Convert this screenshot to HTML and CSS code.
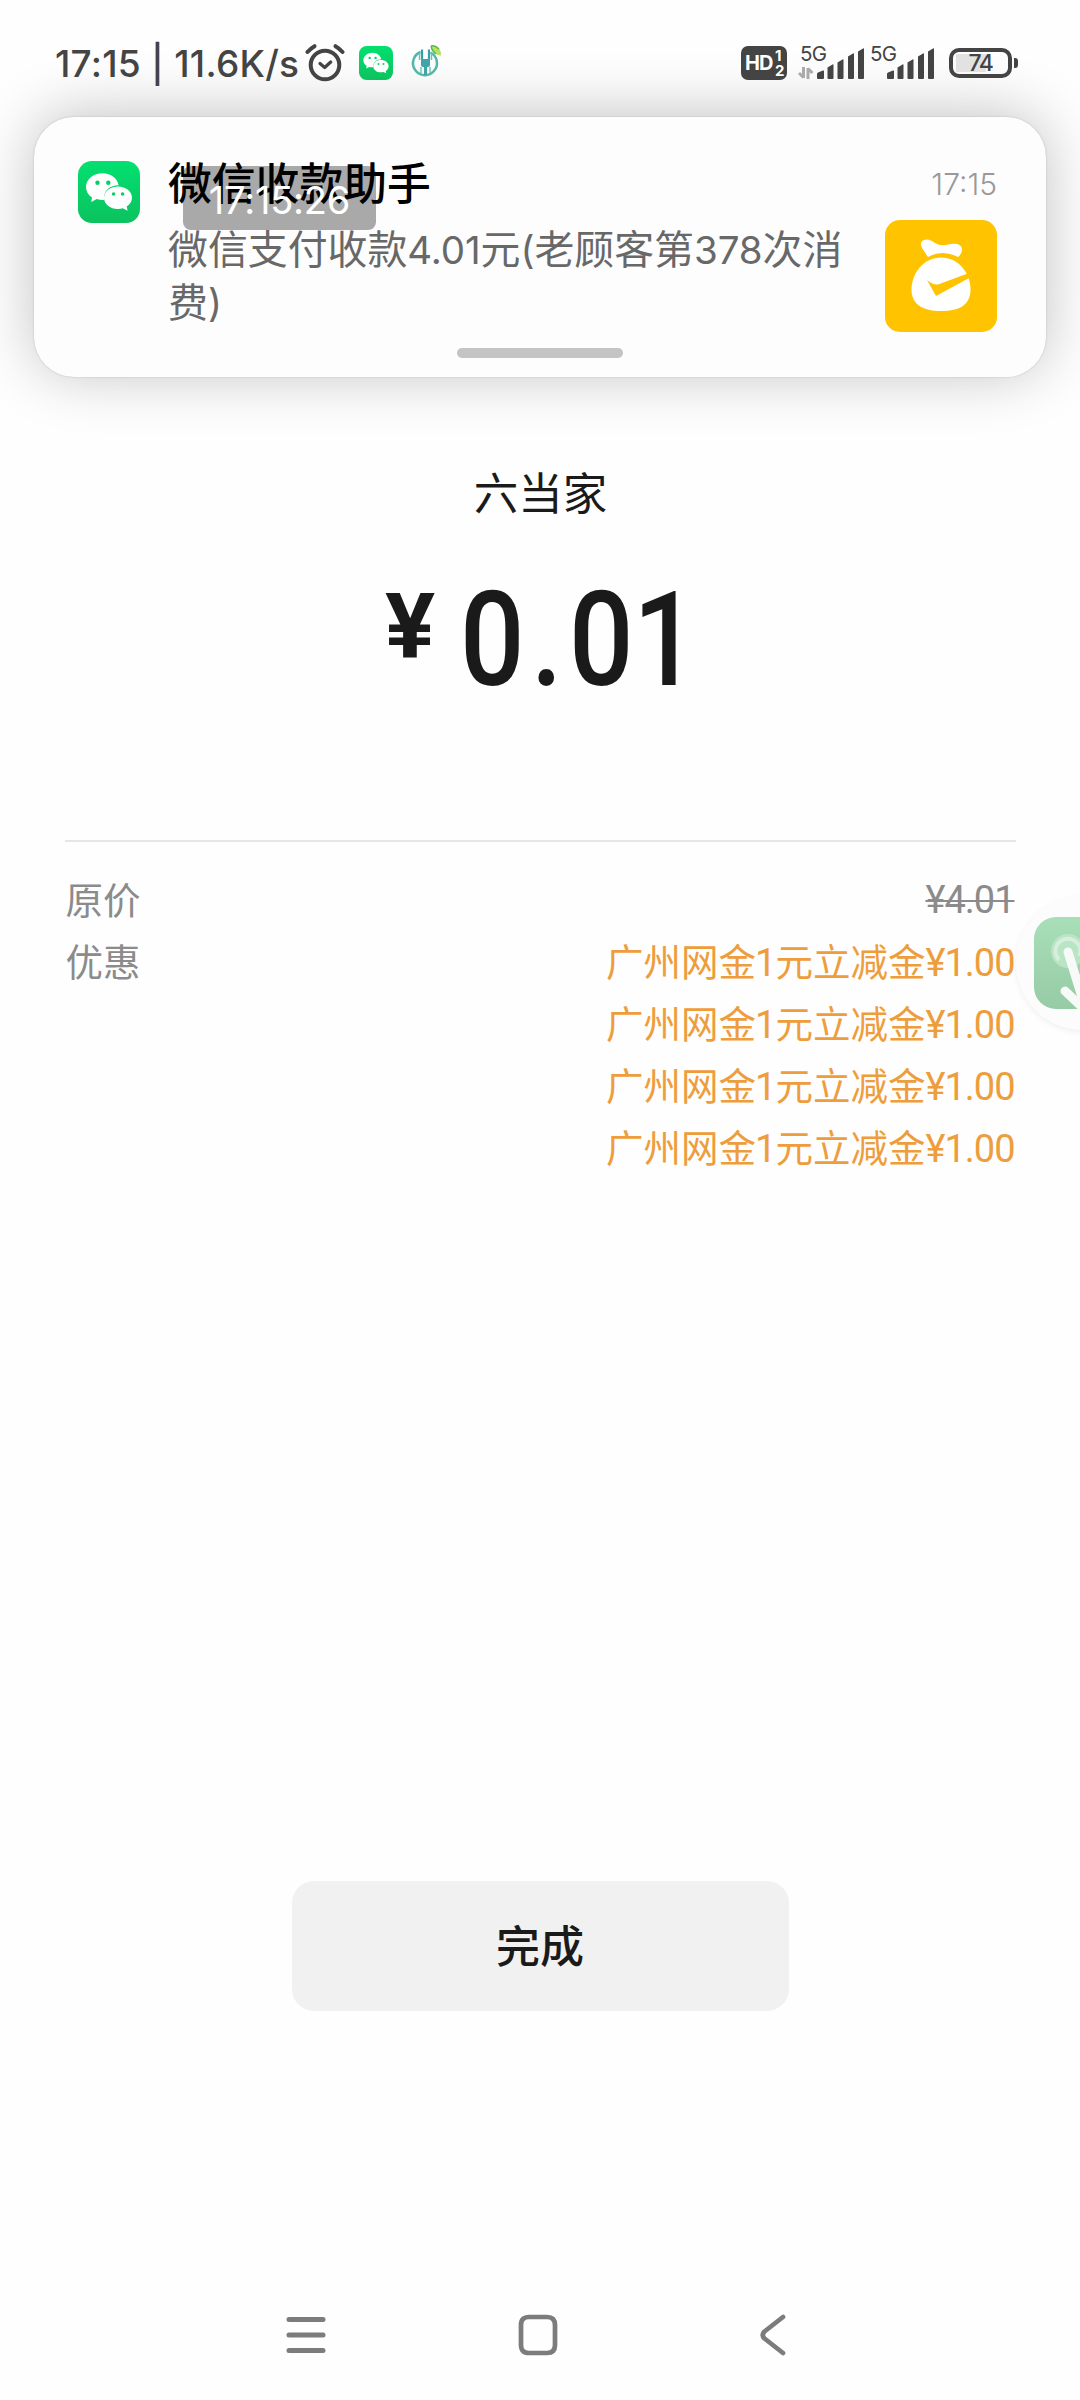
FILE: index.html
```html
<!DOCTYPE html>
<html lang="zh-CN">
<head>
<meta charset="utf-8">
<title>支付完成</title>
<link rel="stylesheet" href="styles.css">
</head>
<body>
<svg class="defs" width="0" height="0">
  <defs>
    <linearGradient id="wg" x1="0" y1="0" x2="0" y2="1"><stop offset="0" stop-color="#02e070"/><stop offset="1" stop-color="#0bc25f"/></linearGradient>
    <symbol id="wechat" viewBox="0 0 62 62">
      <rect width="62" height="62" rx="14" fill="url(#wg)"/>
      <path fill="#fff" d="M24.500 12.300C15.500 12.300 8 18.300 8 26c0 4.300 2.300 8 6 10.500L13.200 41l5.600-2.900c2 .6 4 .8 6 .8h1.600C24.600 31 31 24.300 40.600 24.300 39.500 17.500 33 12.300 24.500 12.300z"/>
      <path fill="#fff" d="M40 25.500c-8 0-14 5-14 11.200S32 48 40 48c1.700 0 3.300-.2 4.800-.7l4.800 2.500-.9-4.300c3.200-2 5.300-5.200 5.300-8.800 0-6.200-6-11.200-14-11.200z"/>
      <g fill="#05cf66"><circle cx="19.500" cy="21.700" r="2.200"/><circle cx="30.300" cy="21.700" r="2.200"/><circle cx="35.600" cy="33" r="1.800"/><circle cx="44.600" cy="33" r="1.800"/></g>
    </symbol>
    <symbol id="signal" viewBox="0 0 48 32">
      <g fill="#444"><path d="M0 31v-4q0-1 1-1.500l5-2q1-.4 1 .5v7q0 1-1 1H1q-1 0-1-1z"/><path d="M10.500 31V20.500l5-3q1-.5 1 .5v13q0 1-1 1h-4q-1 0-1-1z"/><path d="M20.500 31V15.500l5-3q1-.5 1 .5v18q0 1-1 1h-4q-1 0-1-1z"/><path d="M31 31V9.500l5-3q1-.5 1 .5v24q0 1-1 1h-4q-1 0-1-1z"/><path d="M41 31V4.500l5-3q1-.5 1 .5v29q0 1-1 1h-4q-1 0-1-1z"/></g>
    </symbol>
  </defs>
</svg>

<div class="phone">
  <header class="status">
    <span class="status-text">17:15 | 11.6K/s</span>
    <svg class="alarm" width="40" height="40" viewBox="0 0 40 40" fill="none" stroke="#444" stroke-linecap="round" stroke-linejoin="round">
      <circle cx="20" cy="22" r="14.300" stroke-width="4"/><path d="M2.500 9Q5.500 5.500 9.500 3.200M37.500 9Q34.500 5.500 30.500 3.200" stroke-width="4"/><path d="M15 20.500l4.700 4 6-5.500" stroke-width="3.200"/>
    </svg>
    <svg class="mini-wechat" width="34" height="34"><use href="#wechat"/></svg>
    <svg class="charge" width="34" height="34" viewBox="0 0 34 34" fill="none">
      <path d="M20.500 7.500A12 12 0 1 1 10.500 7" stroke="#50b8a8" stroke-width="2.500"/>
      <path d="M12 4.500v10M19 4.500v10" stroke="#389fa5" stroke-width="2.200"/><path d="M9.500 8v7M21.500 8v7" stroke="#6ac3b9" stroke-width="1.400"/>
      <path d="M11 14h9v6q0 2-2 2h-1v8h-3v-8h-1q-2 0-2-2z" fill="#3fa5a8"/><path d="M11 22v6M20 22v6" stroke="#6ac3b0" stroke-width="1.400"/>
      <path d="M21 1q5-1 8.500 3 2 3 1.500 6.500-4 0-6.500-3Q21 5 21 1z" fill="#b4e35e"/><path d="M21 1q4-1 8 3M21 1q1 5 5 8" stroke="#5cb653" stroke-width="1.400"/>
    </svg>
    <div class="status-right">
      <div class="hd"><span class="hd-main">HD</span><span class="hd-nums"><i>1</i><i>2</i></span></div>
      <div class="cell"><span class="net">5G</span>
        <svg class="updown" width="16" height="12" viewBox="0 0 16 12" stroke="#aaa" stroke-width="3" fill="none"><path d="M5.500 0v11M5.500 10.500L1 6M10 12V1M10 1.500L14.500 6"/></svg>
        <svg class="bars" width="48" height="32"><use href="#signal"/></svg></div>
      <div class="cell"><span class="net">5G</span><svg class="bars" width="48" height="32"><use href="#signal"/></svg></div>
      <div class="battery"><span>74</span></div><i class="nub"></i>
    </div>
  </header>

  <main class="pay">
    <div class="payee">六当家</div>
    <div class="amount"><span class="yen">¥</span><span class="num">0.0<b>1</b></span></div>
    <section class="detail">
      <div class="row"><span>原价</span><span class="old">¥4.01</span></div>
      <div class="row"><span>优惠</span>
        <div class="offers"><span>广州网金<b class="one">1</b>元立减金<b>¥1.00</b></span><span>广州网金<b class="one">1</b>元立减金<b>¥1.00</b></span><span>广州网金<b class="one">1</b>元立减金<b>¥1.00</b></span><span>广州网金<b class="one">1</b>元立减金<b>¥1.00</b></span></div>
      </div>
    </section>
    <button class="done">完成</button>
  </main>

  <nav class="nav">
    <svg width="40" height="42" viewBox="0 0 40 42" fill="none" stroke="#7c7c7c" stroke-width="5" stroke-linecap="round"><path d="M3 5.500h34M3 21h34M3 36.500h34"/></svg>
    <svg class="home" width="42" height="42" viewBox="0 0 42 42" fill="none" stroke="#7c7c7c" stroke-width="4.700"><path d="M12 3h18q8 0 8 8v20q0 8-8 8H12q-8 0-8-8V11q0-8 8-8z"/></svg>
    <svg class="back" width="28" height="42" viewBox="0 0 28 42" fill="none" stroke="#7c7c7c" stroke-width="4.700" stroke-linecap="round" stroke-linejoin="round"><path d="M24 3L5.500 17.500q-3.500 3.500 0 7L24 39"/></svg>
  </nav>

  <aside class="float">
    <svg width="64" height="92" viewBox="0 0 64 92" fill="none">
      <defs><linearGradient id="fg" x1="0" y1="0" x2="0" y2="1"><stop offset="0" stop-color="#a9dfb8"/><stop offset="1" stop-color="#96cba5"/></linearGradient></defs>
      <rect width="92" height="92" rx="22" fill="url(#fg)"/>
      <circle cx="34" cy="34" r="17" fill="#b9e5c5"/><path d="M25 43A12.500 12.500 0 1 1 45.500 39" stroke="#d5efdc" stroke-width="4"/>
      <path d="M34 35l13 42M48 90L31 74" stroke="#f7faf7" stroke-width="9" stroke-linecap="round"/>
    </svg>
  </aside>

  <article class="notice">
    <svg class="app-icon" width="62" height="62"><use href="#wechat"/></svg>
    <div class="notice-copy">
      <div class="notice-title">微信收款助手</div>
      <div class="notice-body">微信支付收款<b>4.01</b>元<b>(</b>老顾客第<b>378</b>次消<br>费<b>)</b></div>
    </div>
    <div class="notice-side">
      <time>17:15</time>
      <svg width="112" height="112" viewBox="0 0 112 112">
        <rect width="112" height="112" rx="15" fill="#ffc300"/>
        <path fill="#fff" d="M43 37l-6-9q-3-6 2-8 5-2 11 3 5 3 11 2 7-2 11-1 5 1 5 6 0 4-4 7-16-8-30 0z"/>
        <path fill="#fff" d="M56 37.500c17 0 29.500 15 29.500 32S72 91 56 91 26.500 86 26.500 69.500s12.500-32 29.500-32z"/>
        <path fill="#ffc300" d="M42 60q6 5 11 4.500L84 53l1 4.500L51 76z"/>
      </svg>
    </div>
    <i class="handle"></i>
  </article>
  <div class="clock">17:15:26</div>
</div>
</body>
</html>
```
FILE: styles.css
```css
* { box-sizing: border-box; }
body { margin: 0; background: #fefefe; font-family: Inter, "Noto Sans CJK SC", sans-serif; }
i { font-style: normal; }
b { font-weight: inherit; }
svg { display: block; flex: none; }
.defs { position: absolute; }
.phone { position: relative; width: 1080px; height: 2400px; overflow: hidden; display: flex; flex-direction: column; background: #fefefe; }

.status { position: relative; z-index: 3; height: 117px; padding: 42px 62px 0 55px; display: flex; align-items: flex-start; color: #444; }
.status-text { width: 248px; font-size: 37px; font-weight: 500; line-height: 44px; white-space: nowrap; letter-spacing: .25px; }
.alarm { margin: 1px 0 0 2px; }
.mini-wechat { margin: 4px 0 0 14px; }
.charge { margin: 3px 0 0 17px; }
.status-right { margin-left: auto; display: flex; }
.hd { margin: 4px 11px 0 0; width: 46px; height: 34px; border-radius: 7px; background: #444; color: #fff; display: flex; padding-left: 4px; font-weight: 700; }
.hd-main { font-size: 20px; line-height: 34px; width: 30px; letter-spacing: -1px; }
.hd-nums { display: flex; flex-direction: column; padding-top: 2px; font-size: 15px; line-height: 15px; }
.cell { width: 66px; margin-right: 4px; height: 40px; display: grid; grid-template-columns: 19px 47px; grid-template-rows: 24px 16px; }
.net { grid-area: 1 / 1; font-size: 20.500px; line-height: 24px; padding-left: 2px; letter-spacing: -.8px; }
.updown { grid-area: 2 / 1; margin-top: 1px; }
.bars { grid-area: 1 / 2 / 3 / 3; margin-top: 5px; }
.battery { margin: 6px 2px 0 11px; width: 63px; height: 30px; border: 4px solid #444; border-radius: 10px; display: flex; align-items: center; justify-content: center; font-size: 23px; font-weight: 500; line-height: 24px; letter-spacing: -1.500px; background: linear-gradient(#e2e2e2, #e2e2e2) 3px 2px / 30px 18px no-repeat; }
.nub { width: 4px; height: 10px; margin-top: 16px; border-radius: 0 3px 3px 0; background: #444; }

.pay { flex: 1; display: flex; flex-direction: column; align-items: center; padding-top: 344px; color: #1a1a1a; }
.payee { padding-left: 1px; font-size: 44.500px; line-height: 60px; font-family: "Noto Sans CJK SC", sans-serif; }
.amount { display: flex; align-items: flex-start; width: 310px; margin-top: 61px; height: 120px; font-family: Roboto, sans-serif; font-weight: 500; }
.yen { flex: none; width: 74px; font-size: 90px; line-height: 91px; font-weight: 700; transform-origin: 0 0; transform: scaleX(1.04); }
.num { flex: none; margin-left: 1px; font-size: 132px; line-height: 116px; letter-spacing: 7.500px; white-space: nowrap; transform-origin: 0 0; transform: scaleX(.86); }
.num b { margin-left: -8px; }
.detail { width: 951px; margin-top: 138px; border-top: 2px solid #e6e6e6; padding-top: 25px; font-family: "Noto Sans CJK SC", sans-serif; font-size: 37.500px; line-height: 62px; color: #8b8b8b; }
.row { display: flex; justify-content: space-between; height: 62px; padding: 0 1px; }
.row + .row { height: 248px; }
.old, .offers b { font-family: Roboto, sans-serif; font-size: 38px; letter-spacing: -1px; }
.old { padding-top: 2px; text-decoration: line-through; text-decoration-thickness: 2px; }
.offers { display: flex; flex-direction: column; color: #ee9d3c; }
.offers span { white-space: nowrap; height: 62px; }
.offers .one { margin: 0 0 0 -1px; }
.done { margin-top: 704px; width: 497px; height: 130px; padding: 0 0 4px; border: 0; border-radius: 22px; background: #f1f1f1; color: #1a1a1a; font: 500 44px/60px "Noto Sans CJK SC", sans-serif; }

.nav { height: 86px; padding-left: 286px; display: flex; align-items: flex-start; }
.home { margin-left: 191px; }
.back { margin-left: 200px; }

.float { position: absolute; left: 1016px; top: 896px; width: 134px; height: 134px; border-radius: 50%; background: #fcfcfc; box-shadow: 0 2px 6px rgba(0,0,0,.06); padding: 21px 0 0 18px; }

.notice { position: absolute; z-index: 2; left: 34px; top: 117px; width: 1012px; height: 260px; border-radius: 40px; background: #fdfdfd; box-shadow: 0 0 2px rgba(0,0,0,.2), 0 -3px 60px rgba(0,0,0,.24); display: flex; padding: 44px 49px 0 44px; }
.notice-copy { margin-left: 28px; white-space: nowrap; font-family: "Noto Sans CJK SC", sans-serif; }
.notice-title { margin-top: -3px; font-size: 43.800px; font-weight: 500; line-height: 46px; color: #000; }
.notice-body { margin-top: 16px; font-size: 39.900px; line-height: 53px; color: #686868; }
.notice-body b { font-family: Inter, sans-serif; font-size: 38.500px; line-height: 0; letter-spacing: -.1px; }
.notice-side { margin-left: auto; display: flex; flex-direction: column; align-items: flex-end; }
.notice-side time { height: 59px; padding-top: 4px; font-size: 30px; line-height: 38px; font-weight: 300; color: #999; }
.handle { position: absolute; left: 423px; top: 231px; width: 166px; height: 10px; border-radius: 5px; background: #c4c4c4; }
.clock { position: absolute; z-index: 4; left: 183px; top: 166px; width: 193px; height: 64px; border-radius: 8px; background: rgba(0,0,0,.33); color: #fff; font-size: 38px; line-height: 68px; letter-spacing: -.2px; text-align: center; white-space: nowrap; }
```
